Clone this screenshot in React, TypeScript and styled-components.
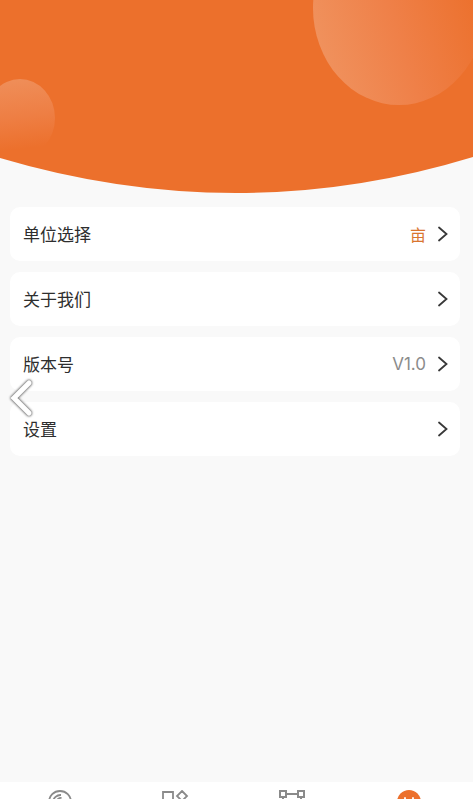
import React from "react";
import styled, { createGlobalStyle } from "styled-components";

const GlobalStyle = createGlobalStyle`
  *, *::before, *::after { box-sizing: border-box; }
  body {
    margin: 0;
    background: #f9f9f9;
    font-family: "Noto Sans CJK SC", "Noto Sans", sans-serif;
    color: #2e2e2e;
  }
  button { font: inherit; color: inherit; border: 0; cursor: pointer; }
`;

const Page = styled.div`
  display: flex;
  flex-direction: column;
  height: 100vh;
  overflow: hidden;
  position: relative;
`;

const Banner = styled.svg`
  display: block;
  flex: none;
  width: 100%;
  height: 194px;
`;

const Menu = styled.main`
  flex: 1;
  display: flex;
  flex-direction: column;
  gap: 11px;
  padding: 13px 13px 0 10px;
`;

const Row = styled.button`
  display: flex;
  align-items: center;
  gap: 11px;
  width: 100%;
  height: 54px;
  padding: 0 11px 0 13px;
  border-radius: 10px;
  background: #fff;
  font-size: 17px;
  line-height: 24px;
  text-align: left;
`;

const Label = styled.span`
  flex: 1;
`;

const Value = styled.span<{ $accent?: boolean }>`
  color: ${(p) => (p.$accent ? "#d9752f" : "#8b8b8b")};
  font-family: ${(p) => (p.$accent ? "inherit" : '"Inter", sans-serif')};
  font-size: ${(p) => (p.$accent ? "16px" : "17px")};
`;

const BackButton = styled.button`
  position: absolute;
  left: 4px;
  top: 374px;
  padding: 0;
  background: none;
  line-height: 0;
  filter: drop-shadow(0 0 1px #666) drop-shadow(0 0 1px #888);
`;

const TabBar = styled.nav`
  flex: none;
  display: grid;
  grid-template-columns: repeat(4, 1fr);
  height: 17px;
  padding: 0 6px 0 2px;
  background: #fff;
  overflow: hidden;
`;

const Tab = styled.button`
  display: flex;
  justify-content: center;
  align-items: flex-start;
  padding: 8px 0 0;
  background: none;
`;

const Chevron = () => (
  <svg width="12" height="16" viewBox="0 0 12 16" fill="none" stroke="#383838" strokeWidth="1.8" aria-hidden="true">
    <path d="M2 1.5 9.5 8 2 14.5" strokeLinecap="round" />
  </svg>
);

const TabIcon = ({ children }: { children: React.ReactNode }) => (
  <svg width="28" height="26" viewBox="-1 0 28 26" fill="none" stroke="#8a8a8a" strokeWidth="1.8" aria-hidden="true">
    {children}
  </svg>
);

const rows = [
  { label: "单位选择", value: "亩", accent: true },
  { label: "关于我们" },
  { label: "版本号", value: "V1.0" },
  { label: "设置" },
];

const tabs = [
  {
    name: "测量",
    icon: (
      <>
        <circle cx="13" cy="12" r="11" />
        <path d="M6 12a7.500 7.500 0 0 1 8-7M9.500 12a4.500 4.500 0 0 1 5-4" />
      </>
    ),
  },
  {
    name: "功能",
    icon: (
      <path d="M0 2h10v9H0zM0 15h10v9H0zM14 15h10v9H14zM19 1l5 5-5 5-5-5z" />
    ),
  },
  {
    name: "图形",
    icon: (
      <path
        strokeWidth="2"
        d="M0 1h6v6H0zM18 1h6v6h-6zM0 18h6v6H0zM18 18h6v6h-6zM6 4h12M3 7v11M21 7v11"
      />
    ),
  },
  {
    name: "我的",
    icon: (
      <>
        <circle cx="13" cy="12" r="12" fill="#ec702c" stroke="none" />
        <path d="M9 8v3M17 8v3M7 15a7 7 0 0 0 12 0" stroke="#fff" strokeLinecap="round" />
      </>
    ),
  },
];

export default function App() {
  return (
    <Page>
      <GlobalStyle />
      <Banner viewBox="0 0 473 194" preserveAspectRatio="none" aria-hidden="true">
        <defs>
          <linearGradient id="large" x1="0" y1="0.75" x2="0.95" y2="0.4">
            <stop offset="0" stopColor="#f0935f" />
            <stop offset="0.5" stopColor="#ef8048" />
            <stop offset="1" stopColor="#ec702c" />
          </linearGradient>
          <linearGradient id="small" x1="0.4" y1="0" x2="0.5" y2="1">
            <stop offset="0" stopColor="#ef8e59" />
            <stop offset="0.5" stopColor="#ee7e43" />
            <stop offset="0.9" stopColor="#ec702c" />
          </linearGradient>
        </defs>
        <path d="M0 0H473V157Q355 193 236 193Q118 193 0 158Z" fill="#ec702c" />
        <ellipse cx="399" cy="8" rx="86" ry="97" fill="url(#large)" />
        <ellipse cx="20" cy="118" rx="35" ry="39" fill="url(#small)" />
      </Banner>
      <Menu>
        {rows.map((row) => (
          <Row key={row.label} type="button">
            <Label>{row.label}</Label>
            {row.value && <Value $accent={row.accent}>{row.value}</Value>}
            <Chevron />
          </Row>
        ))}
      </Menu>
      <BackButton type="button" aria-label="返回">
        <svg width="34" height="48" viewBox="0 0 34 48" fill="none" stroke="#fff" strokeWidth="5" strokeLinecap="round">
          <path d="M25 9 10 24 25 39" />
        </svg>
      </BackButton>
      <TabBar>
        {tabs.map((tab) => (
          <Tab key={tab.name} type="button" aria-label={tab.name}>
            <TabIcon>{tab.icon}</TabIcon>
          </Tab>
        ))}
      </TabBar>
    </Page>
  );
}
